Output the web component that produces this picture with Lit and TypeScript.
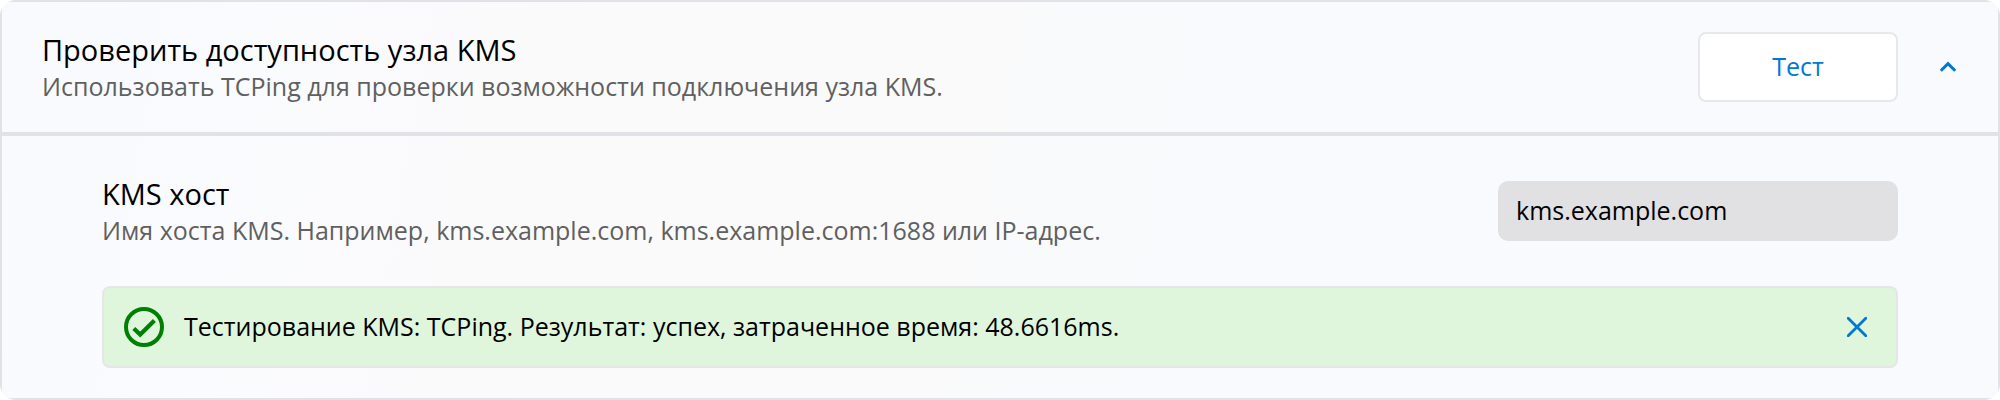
import { LitElement, html, css, nothing } from "lit";
import { customElement, state } from "lit/decorators.js";

@customElement("app-root")
export class AppRoot extends LitElement {
  static styles = css`
    :host {
      display: block;
      font-family: "Open Sans", "Segoe UI", sans-serif;
      font-size: 25px;
      color: #000;
    }
    * {
      box-sizing: border-box;
    }
    .card {
      border-radius: 16px;
      overflow: hidden;
    }
    .frame {
      border: 2px solid #e0e2e8;
      background: linear-gradient(100deg, #f9fafe 0%, #fafbfd 14%, #fafafb 30%, #fafafb 48%, #f9fafe 64%, #f9fafe 100%);
    }
    .head {
      display: flex;
      align-items: center;
      padding: 29px 32px 29px 40px;
      border-bottom: 4px solid #e0e2e8;
    }
    .body {
      display: flex;
      flex-direction: column;
      gap: 39px;
      padding: 39px 100px 30px;
    }
    .row {
      display: flex;
      align-items: center;
    }
    .text {
      flex: 1;
      min-width: 0;
    }
    .title {
      display: block;
      margin: 0;
      font-size: 29px;
      font-weight: 400;
      line-height: 38px;
    }
    .desc {
      margin: 0;
      line-height: 34px;
      color: #606060;
    }
    button {
      font: inherit;
      color: #0078d4;
      cursor: pointer;
    }
    .test {
      width: 200px;
      height: 70px;
      padding: 0 0 2px;
      border: 2px solid #e7e8ea;
      border-radius: 8px;
      background: #fff;
    }
    .icon-button {
      display: grid;
      place-items: center;
      width: 36px;
      height: 36px;
      padding: 0;
      border: 0;
      background: none;
    }
    .toggle {
      margin-left: 32px;
    }
    .host {
      width: 400px;
      height: 60px;
      padding: 0 18px 2px;
      border: 0;
      border-radius: 10px;
      background: #e1e1e3;
      color: #000;
      font: inherit;
      outline: none;
    }
    .alert {
      display: flex;
      align-items: center;
      gap: 20px;
      min-height: 82px;
      padding: 0 21px 0 20px;
      border: 2px solid #e6e6e9;
      border-radius: 8px;
      background: #dff6dd;
    }
    .message {
      flex: 1;
      padding-bottom: 2px;
      line-height: 34px;
    }
    svg {
      display: block;
      flex: none;
    }
  `;

  @state() private open = true;
  @state() private result = "Тестирование KMS: TCPing. Результат: успех, затраченное время: 48.6616ms.";

  private renderResult() {
    if (!this.result) return nothing;
    return html`
      <div class="alert" role="status">
        <svg width="40" height="40" viewBox="0 0 40 40" fill="none" stroke="#008000" aria-hidden="true">
          <circle cx="20" cy="20" r="18" stroke-width="4" />
          <path d="M9.8 21.4 L16.2 27.6 L30.4 13.4" stroke-width="4.2" />
        </svg>
        <span class="message">${this.result}</span>
        <button class="icon-button" aria-label="Закрыть" @click=${() => (this.result = "")}>
          <svg width="20" height="20" viewBox="0 0 20 20" fill="none" stroke="currentColor" stroke-width="2.8" stroke-linecap="round">
            <path d="M1.2 1.2 L18.8 18.8 M18.8 1.2 L1.2 18.8" />
          </svg>
        </button>
      </div>
    `;
  }

  render() {
    return html`
      <section class="card">
        <div class="frame">
          <header class="head">
            <div class="text">
              <h2 class="title">Проверить доступность узла KMS</h2>
              <p class="desc">Использовать TCPing для проверки возможности подключения узла KMS.</p>
            </div>
            <button class="test">Тест</button>
            <button class="icon-button toggle" aria-label="Свернуть" aria-expanded=${this.open} @click=${() => (this.open = !this.open)}>
              <svg width="18" height="12" viewBox="0 0 18 12" fill="none" stroke="currentColor" stroke-width="3">
                <path d="M1.8 9.8 L9 2.6 L16.2 9.8" />
              </svg>
            </button>
          </header>
          ${this.open
            ? html`
                <div class="body">
                  <div class="row">
                    <div class="text">
                      <label class="title" for="host">KMS хост</label>
                      <p class="desc" id="host-hint">Имя хоста KMS. Например, kms.example.com, kms.example.com:1688 или IP-адрес.</p>
                    </div>
                    <input class="host" id="host" type="text" aria-describedby="host-hint" .value=${"kms.example.com"} />
                  </div>
                  ${this.renderResult()}
                </div>
              `
            : nothing}
        </div>
      </section>
    `;
  }
}
